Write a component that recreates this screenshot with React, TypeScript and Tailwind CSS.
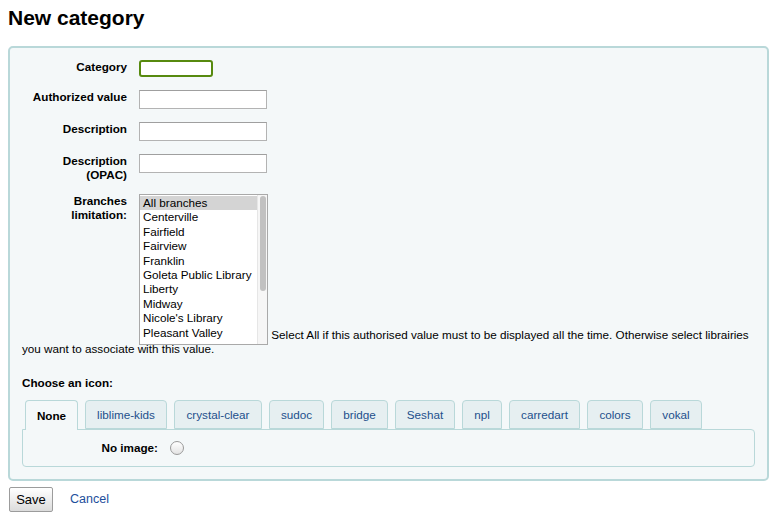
import React from "react";

const branches = [
  "All branches",
  "Centerville",
  "Fairfield",
  "Fairview",
  "Franklin",
  "Goleta Public Library",
  "Liberty",
  "Midway",
  "Nicole's Library",
  "Pleasant Valley",
];

const tabs = [
  { name: "None", w: "w-[53px]" },
  { name: "liblime-kids", w: "w-[82px]" },
  { name: "crystal-clear", w: "w-[88px]" },
  { name: "sudoc", w: "w-[55px]" },
  { name: "bridge", w: "w-[57px]" },
  { name: "Seshat", w: "w-[60px]" },
  { name: "npl", w: "w-[40px]" },
  { name: "carredart", w: "w-[71px]" },
  { name: "colors", w: "w-[56px]" },
  { name: "vokal", w: "w-[52px]" },
];

function TextRow({ label, wide = true }: { label: React.ReactNode; wide?: boolean }) {
  return (
    <div className="flex items-start mb-[13px]">
      <label className="w-[105px] mr-[12px] text-right font-bold leading-[14px]">{label}</label>
      {wide ? (
        <input className="w-[128px] h-[19px] border border-[#b3b3b3] border-t-[#9f9f9f] bg-white outline-none" />
      ) : (
        <input className="w-[74px] h-[17px] border-2 border-[#578a0f] rounded-[3px] bg-white outline-none" />
      )}
    </div>
  );
}

export default function App() {
  return (
    <div className="min-h-screen bg-white pl-2 pr-[4px] pt-2 text-black text-[11.7px] font-['Liberation_Sans',Arial,sans-serif]">
      <h1 className="text-[21px] font-bold leading-[20px]">New category</h1>

      <fieldset className="mt-[18px] border-2 border-[#b9d8d9] rounded-[5px] bg-[#f4f8f9] pt-[12px] px-[12px] pb-[12px]">
        <TextRow label="Category" wide={false} />
        <TextRow label="Authorized value" />
        <TextRow label="Description" />
        <div className="flex items-start mb-[12px]">
          <label className="w-[105px] mr-[12px] text-right font-bold leading-[14px]">
            Description
            <br />
            (OPAC)
          </label>
          <input className="w-[128px] h-[19px] border border-[#b3b3b3] border-t-[#9f9f9f] bg-white outline-none" />
        </div>

        {/* Branches: floated label, listbox inline so the help text wraps under the label */}
        <div className="leading-[14px]">
          <label className="float-left w-[105px] mr-[12px] text-right font-bold">
            Branches
            <br />
            limitation:
          </label>
          <div className="inline-flex align-bottom mb-[-3px] w-[129px] h-[151px] overflow-hidden border border-[#a9a9a9] bg-white">
            <div className="flex-1 pt-[1px]">
              {branches.map((b, i) => (
                <div
                  key={b}
                  className={
                    "pl-[3px] leading-[14.4px] whitespace-nowrap " + (i === 0 ? "bg-[#d4d4d4]" : "")
                  }
                >
                  {b}
                </div>
              ))}
            </div>
            <div className="w-[10px] shrink-0 bg-[#f6f6f6] border-l border-[#e6e6e6] pt-[1px]">
              <div className="mx-auto w-[6px] h-[95px] rounded-full bg-[#c1c1c1]" />
            </div>
          </div>{" "}
          <span>
            Select All if this authorised value must to be displayed all the time. Otherwise select librairies you want
            to associate with this value.
          </span>
        </div>

        <div className="mt-[20px] font-bold leading-[14px]">Choose an icon:</div>

        <div className="mt-[10px]">
          <div className="flex gap-[7px] pl-[3px] relative z-10">
            {tabs.map((t, i) =>
              i === 0 ? (
                <div
                  key={t.name}
                  className={`${t.w} h-[30px] flex items-center justify-center border border-b-0 border-[#b9d8d9] rounded-t-[4px] bg-[#f4f8f9] font-bold text-[11.7px] text-black`}
                >
                  {t.name}
                </div>
              ) : (
                <div
                  key={t.name}
                  className={`${t.w} h-[29px] flex items-center justify-center border border-[#b9d8d9] rounded-t-[4px] bg-[#e6eff1] text-[11.7px] text-[#1d4f8c]`}
                >
                  {t.name}
                </div>
              )
            )}
          </div>
          <div className="mt-[-1px] h-[38px] flex items-center pl-[30px] border border-[#b9d8d9] rounded-b-[4px] rounded-tr-[4px] bg-[#f4f8f9]">
            <label className="w-[105px] text-right font-bold leading-[14px]">No image:</label>
            <span className="ml-[12px] w-[14px] h-[14px] rounded-full border border-[#9a9a9a] bg-gradient-to-b from-[#ffffff] to-[#e3e3e3]" />
          </div>
        </div>
      </fieldset>

      <div className="mt-[6px] flex items-center">
        <button className="ml-[1px] w-[44px] h-[25px] border border-[#9c9c9c] rounded-[2px] bg-gradient-to-b from-[#ffffff] to-[#dcdcdc] text-[13px] text-black leading-none">
          Save
        </button>
        <a className="ml-[17px] text-[12.5px] text-[#1d4f9c]">Cancel</a>
      </div>
    </div>
  );
}
